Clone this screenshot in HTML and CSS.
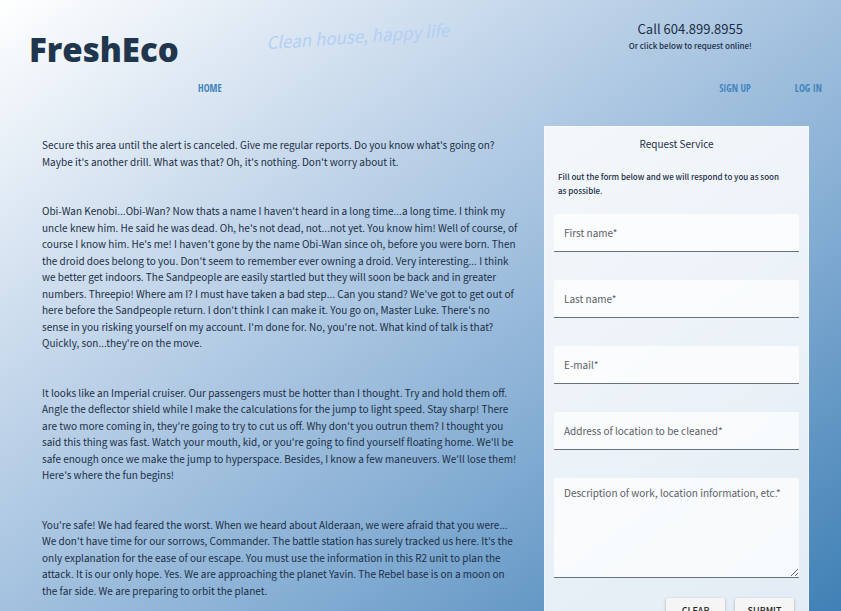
FILE: index.html
```html
<!DOCTYPE html>
<html lang="en">
<head>
<meta charset="utf-8">
<title>FreshEco</title>
<meta name="viewport" content="width=device-width, initial-scale=1">
<link rel="stylesheet" href="styles.css">
</head>
<body>
<header class="masthead">
  <h1 class="brand">FreshEco</h1>
  <p class="tagline">Clean house, happy life</p>
  <div class="contact">
    <p class="phone">Call 604.899.8955</p>
    <p class="hint">Or click below to request online!</p>
  </div>
</header>
<nav class="menu">
  <a href="#home" class="home">HOME</a>
  <a href="#signup">SIGN UP</a>
  <a href="#login">LOG IN</a>
</nav>
<main class="content">
  <article class="story">
    <p>Secure this area until the alert is canceled. Give me regular reports. Do you know what's going on? Maybe it's another drill. What was that? Oh, it's nothing. Don't worry about it.</p>
    <p>Obi-Wan Kenobi...Obi-Wan? Now thats a name I haven't heard in a long time...a long time. I think my uncle knew him. He said he was dead. Oh, he's not dead, not...not yet. You know him! Well of course, of course I know him. He's me! I haven't gone by the name Obi-Wan since oh, before you were born. Then the droid does belong to you. Don't seem to remember ever owning a droid. Very interesting... I think we better get indoors. The Sandpeople are easily startled but they will soon be back and in greater numbers. Threepio! Where am I? I must have taken a bad step... Can you stand? We've got to get out of here before the Sandpeople return. I don't think I can make it. You go on, Master Luke. There's no<br>sense in you risking yourself on my account. I'm done for. No, you're not. What kind of talk is that?<br>Quickly, son...they're on the move.</p>
    <p>It looks like an Imperial cruiser. Our passengers must be hotter than I thought. Try and hold them off. Angle the deflector shield while I make the calculations for the jump to light speed. Stay sharp! There are two more coming in, they're going to try to cut us off. Why don't you outrun them? I thought you said this thing was fast. Watch your mouth, kid, or you're going to find yourself floating home. We'll be safe enough once we make the jump to hyperspace. Besides, I know a few maneuvers. We'll lose them! Here's where the fun begins!</p>
    <p>You're safe! We had feared the worst. When we heard about Alderaan, we were afraid that you were... We don't have time for our sorrows, Commander. The battle station has surely tracked us here. It's the only explanation for the ease of our escape. You must use the information in this R2 unit to plan the attack. It is our only hope. Yes. We are approaching the planet Yavin. The Rebel base is on a moon on<br>the far side. We are preparing to orbit the planet.</p>
  </article>
  <form class="request">
    <h2>Request Service</h2>
    <p class="intro">Fill out the form below and we will respond to you as soon as possible.</p>
    <input class="field" type="text" aria-label="First name" placeholder="First name*">
    <input class="field" type="text" aria-label="Last name" placeholder="Last name*">
    <input class="field" type="email" aria-label="E-mail" placeholder="E-mail*">
    <input class="field" type="text" aria-label="Address of location to be cleaned" placeholder="Address of location to be cleaned*">
    <textarea class="field area" aria-label="Description of work" placeholder="Description of work, location information, etc.*"></textarea>
    <div class="actions">
      <button type="reset">CLEAR</button>
      <button type="submit">SUBMIT</button>
    </div>
  </form>
</main>
</body>
</html>
```
FILE: styles.css
```css
* { box-sizing: border-box; }

html {
  min-height: 100%;
  background: linear-gradient(to bottom right, #ffffff, #bdd2e8 36%, #84add3 67%, #4080b5) fixed;
}

body {
  margin: 0;
  font-family: "Noto Sans CJK JP", "Noto Sans", sans-serif;
  font-size: 10px;
  font-weight: 400;
  line-height: 1.65;
  color: #1c2f46;
}

h1, h2, p { margin: 0; }

.masthead {
  display: grid;
  grid-template-columns: 27% 27% 1fr;
  align-items: start;
  height: 80px;
  padding: 20px 0 0 29px;
}

.brand {
  font: 800 33px/60px "Open Sans", sans-serif;
  color: #1f364d;
}

.tagline {
  font-size: 17px;
  font-style: italic;
  line-height: 32px;
  text-align: center;
  white-space: nowrap;
  color: #b3cff5;
  transform: rotate(-4deg);
}

.contact {
  padding-left: 122px;
  padding-right: 50px;
  text-align: center;
}

.phone {
  font-size: 13px;
  line-height: 18px;
}

.hint {
  font-size: 8px;
  font-weight: 500;
  line-height: 16px;
}

.menu {
  display: flex;
  gap: 44px;
  padding: 0 19px 0 198px;
  font: bold 10px/16px "Open Sans Condensed", "Roboto Condensed", "Noto Sans CJK JP", sans-serif;
}

.menu a {
  color: #4384bd;
  text-decoration: none;
}

.home { margin-right: auto; }

.content {
  display: grid;
  grid-template-columns: 1fr 265px;
  gap: 20px;
  align-items: start;
  padding: 30px 32px 24px 42px;
}

.story {
  display: grid;
  gap: 33px;
  padding-top: 11px;
}

.request {
  padding: 9px;
  border: 1px solid #ffffff55;
  background: #ffffffd9;
}

.request h2 {
  font-size: 10px;
  font-weight: 400;
  line-height: 16px;
  text-align: center;
}

.intro {
  padding: 18px 16px 16px 4px;
  font-size: 8px;
  font-weight: 500;
  line-height: 14px;
}

.field {
  display: block;
  width: 100%;
  height: 38px;
  margin-bottom: 28px;
  padding: 0 10px;
  border: 0;
  border-bottom: 1px solid #69727a;
  border-radius: 2px 2px 0 0;
  background: #ffffffb3;
  font: inherit;
  color: #2b3e55;
}

.field::placeholder {
  color: #5c6166;
  opacity: 1;
}

.area {
  height: 100px;
  margin-bottom: 20px;
  padding: 7px 10px;
  resize: vertical;
}

.actions {
  display: flex;
  justify-content: flex-end;
  gap: 10px;
  padding-right: 5px;
}

button {
  width: 59px;
  height: 26px;
  padding: 0;
  border: 0;
  border-radius: 2px;
  background: #f5f5f5;
  box-shadow: 0 1px 3px #0000004d;
  font: inherit;
  font-size: 9px;
  font-weight: 500;
  color: #222222;
}
```
